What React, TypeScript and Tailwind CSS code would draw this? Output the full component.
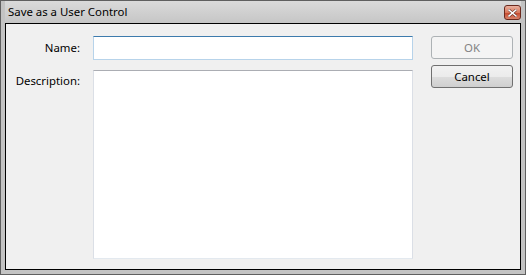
const font = { fontFamily: '"Noto Sans", "Liberation Sans", sans-serif' }

function CloseButton() {
  return (
    <div className="flex h-[15px] w-[17px] items-center justify-center rounded-[3px] border border-[#6b2a1e] bg-[linear-gradient(#eab1a0,#d9785c_50%,#c4472b_51%,#d8826a)]">
      <svg width="9" height="8" viewBox="0 0 9 8">
        <path d="M1 1 L8 7 M8 1 L1 7" stroke="#5a2318" strokeWidth="2.6" strokeLinecap="square" />
        <path d="M1 1 L8 7 M8 1 L1 7" stroke="#ffffff" strokeWidth="1.6" strokeLinecap="square" />
      </svg>
    </div>
  )
}

export default function App() {
  return (
    <div className="h-[275px] w-[526px] bg-[#5f5f5f] p-px text-[11.4px] text-black" style={font}>
      <div className="flex h-full flex-col bg-[#c3c3c3] px-1 pb-1">
        <div className="flex h-[22px] shrink-0 items-start justify-between bg-[linear-gradient(#dadada,#c6c6c6)]">
          <span className="pl-[3px] pt-[3px] leading-[16px]">Save as a User Control</span>
          <div className="pt-[4px]">
            <CloseButton />
          </div>
        </div>
        <div className="flex flex-1 border border-black bg-[#f0f0f0] pt-[12px]">
          <div className="flex w-[74px] flex-col items-end">
            <label className="mt-[4px] leading-[16px]">Name:</label>
            <label className="mt-[17px] leading-[16px]">Description:</label>
          </div>
          <div className="ml-[13px] flex w-[320px] flex-col gap-[10px]">
            <input
              className="h-[24px] border border-[#b7d3ea] border-t-[#3d7bad] bg-white px-1 outline-none"
              style={font}
            />
            <textarea
              className="h-[189px] resize-none border border-[#dbdfe6] border-t-[#abadb3] border-b-[#e3e9ef] bg-white outline-none"
              style={font}
            />
          </div>
          <div className="ml-[18px] flex w-[82px] flex-col gap-[6px]">
            <button
              type="button"
              disabled
              className="h-[23px] rounded-[3px] border border-[#adb2b5] bg-[#f4f4f4] text-[#838383]"
              style={font}
            >
              OK
            </button>
            <button
              type="button"
              className="h-[23px] rounded-[3px] border border-[#707070] bg-[linear-gradient(#f2f2f2,#ebebeb_50%,#dddddd_51%,#cfcfcf)] text-black"
              style={font}
            >
              Cancel
            </button>
          </div>
        </div>
      </div>
    </div>
  )
}
